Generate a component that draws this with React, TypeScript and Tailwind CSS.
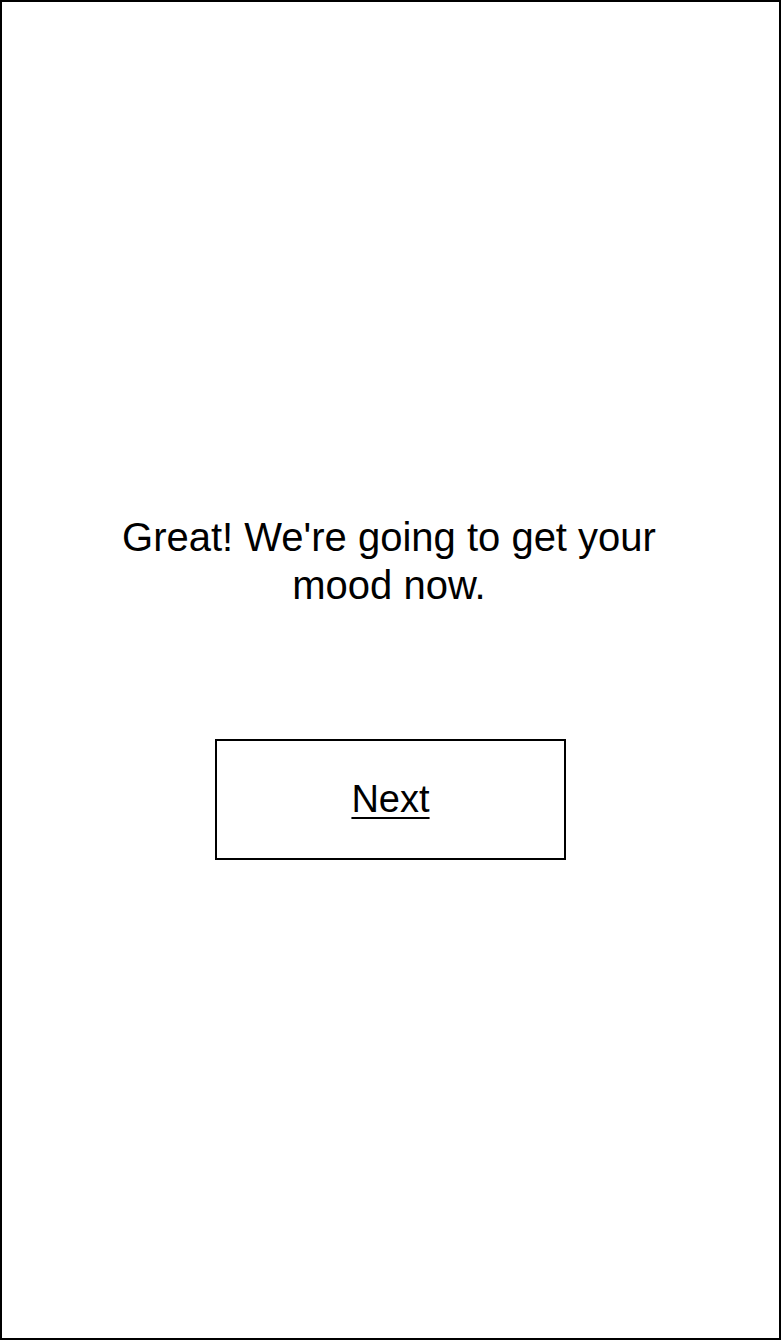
export default function App() {
  return (
    <div className="h-[1340px] w-[781px] border-2 border-black bg-white font-['Liberation_Sans',Arial,sans-serif] text-black">
      <div className="flex flex-col items-center pt-[511px]">
        <p className="mr-[3px] w-[560px] text-center text-[40px] leading-[48px]">
          Great! We're going to get your mood now.
        </p>
        <button className="mt-[130px] flex h-[121px] w-[351px] items-center justify-center border-2 border-black text-[38px] underline decoration-2 underline-offset-[5px]">
          Next
        </button>
      </div>
    </div>
  )
}
